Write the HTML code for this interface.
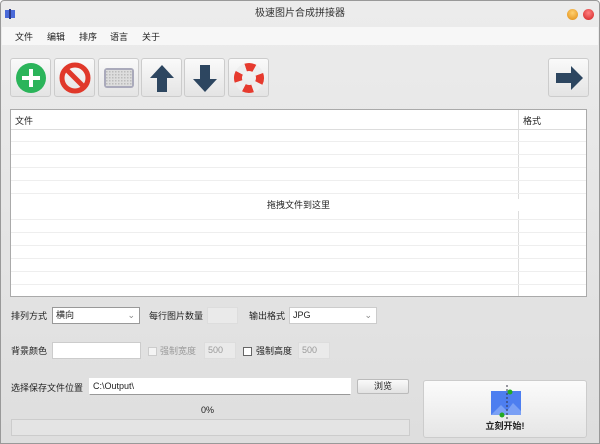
<!DOCTYPE html>
<html><head><meta charset="utf-8"><style>
*{box-sizing:border-box;margin:0;padding:0}
body{width:600px;height:444px;overflow:hidden;font-family:"Liberation Sans","Noto Sans CJK SC",sans-serif;font-size:9px;color:#222;background:#fff}
.win{position:absolute;left:0;top:0;width:600px;height:444px;background:linear-gradient(#ececec,#dedede);border:1px solid #999;border-radius:4px 4px 0 0}
.title{position:absolute;left:0;top:0;width:598px;height:26px;text-align:center;line-height:26px;font-size:10px;color:#333}
.menu{position:absolute;left:1px;top:26px;width:596px;height:18px;background:#f7f7f7}
.menu span{position:absolute;top:3px;font-size:9px}
.tb{position:absolute;top:57px;width:41px;height:39px;border:1px solid #ccc;border-radius:3px;background:linear-gradient(#fafafa,#e4e4e4)}
.tb svg{position:absolute;left:4px;top:3px}
.table{position:absolute;left:9px;top:108px;width:577px;height:188px;background:#fff;border:1px solid #aaa}
.row{position:absolute;left:0;width:575px;height:1px;background:#eee}
.abs{position:absolute}
.inp{position:absolute;background:#fff;border:1px solid #ccc;height:17px;font-size:9px;line-height:15px;padding-left:3px}
.dis{background:#eaeaea;color:#999;border-color:#ddd}
</style></head><body><div class="win">
<div class="title">极速图片合成拼接器</div>
<svg class="abs" style="left:4px;top:8px" width="10" height="10"><rect x="0" y="1" width="10" height="8" fill="#4a6ad8"/><rect x="4" y="0" width="2" height="10" fill="#2a3a88"/></svg>
<div class="abs" style="left:566px;top:8px;width:11px;height:11px;border-radius:50%;background:radial-gradient(circle at 50% 35%,#ffd070,#e08a10)"></div>
<div class="abs" style="left:582px;top:8px;width:11px;height:11px;border-radius:50%;background:radial-gradient(circle at 50% 35%,#ff8080,#d02020)"></div>
<div class="menu"><span style="left:13px">文件</span><span style="left:45px">编辑</span><span style="left:77px">排序</span><span style="left:108px">语言</span><span style="left:140px">关于</span></div>

<div class="tb" style="left:9px"><svg width="32" height="32"><circle cx="16" cy="16" r="15" fill="#2bb45a"/><rect x="14" y="7" width="4" height="18" fill="#fff"/><rect x="7" y="14" width="18" height="4" fill="#fff"/></svg></div>
<div class="tb" style="left:53px"><svg width="32" height="32"><circle cx="16" cy="16" r="13" fill="none" stroke="#e0382a" stroke-width="5"/><line x1="7" y1="7" x2="25" y2="25" stroke="#e0382a" stroke-width="5"/></svg></div>
<div class="tb" style="left:97px"><svg width="32" height="32"><defs><pattern id="p" width="3" height="3" patternUnits="userSpaceOnUse"><rect width="3" height="3" fill="#ddd"/><rect width="1.5" height="1.5" fill="#bbb"/></pattern></defs><rect x="1" y="6" width="30" height="20" rx="3" fill="#aab" /><rect x="3" y="8" width="26" height="16" fill="url(#p)"/></svg></div>
<div class="tb" style="left:140px"><svg width="32" height="32"><path d="M16 3 L28 16 L21 16 L21 30 L11 30 L11 16 L4 16Z" fill="#2d4660"/></svg></div>
<div class="tb" style="left:183px"><svg width="32" height="32"><path d="M16 30 L28 17 L21 17 L21 3 L11 3 L11 17 L4 17Z" fill="#2d4660"/></svg></div>
<div class="tb" style="left:227px"><svg width="32" height="32"><circle cx="16" cy="16" r="11" fill="none" stroke="#e63a2e" stroke-width="8" stroke-dasharray="9 8.3" transform="rotate(-20 16 16)"/><circle cx="16" cy="16" r="11" fill="none" stroke="#eee" stroke-width="8" stroke-dasharray="0 9 8.3 0" transform="rotate(-20 16 16)"/></svg></div>
<div class="tb" style="left:547px"><svg width="32" height="32"><path d="M30 16 L18 4 L18 11 L3 11 L3 21 L18 21 L18 28Z" fill="#2d4660"/></svg></div>

<div class="table">
<div class="abs" style="left:4px;top:4px">文件</div>
<div class="abs" style="left:512px;top:4px">格式</div>
<div class="abs" style="left:507px;top:0;width:1px;height:186px;background:#ddd"></div>
<div class="row" style="top:19px;background:#ddd"></div>
<div class="row" style="top:31px"></div><div class="row" style="top:44px"></div><div class="row" style="top:57px"></div><div class="row" style="top:70px"></div><div class="row" style="top:83px"></div><div class="row" style="top:96px"></div><div class="row" style="top:109px"></div><div class="row" style="top:122px"></div><div class="row" style="top:135px"></div><div class="row" style="top:148px"></div><div class="row" style="top:161px"></div><div class="row" style="top:174px"></div>
<div class="abs" style="left:0;top:89px;width:575px;text-align:center;background:#fff;line-height:12px">拖拽文件到这里</div>
</div>

<div class="abs" style="left:10px;top:308px">排列方式</div>
<div class="inp" style="left:51px;top:306px;width:88px;border-color:#999">横向<span class="abs" style="right:4px;top:0;color:#888">⌄</span></div>
<div class="abs" style="left:148px;top:308px">每行图片数量</div>
<div class="inp dis" style="left:206px;top:306px;width:31px"></div>
<div class="abs" style="left:248px;top:308px">输出格式</div>
<div class="inp" style="left:288px;top:306px;width:88px">JPG<span class="abs" style="right:4px;top:0;color:#888">⌄</span></div>

<div class="abs" style="left:10px;top:343px">背景颜色</div>
<div class="inp" style="left:51px;top:341px;width:89px"></div>
<div class="abs" style="left:147px;top:346px;width:9px;height:9px;border:1px solid #ccc;background:#f4f4f4"></div>
<div class="abs" style="left:159px;top:343px;color:#999">强制宽度</div>
<div class="inp dis" style="left:203px;top:341px;width:32px">500</div>
<div class="abs" style="left:242px;top:346px;width:9px;height:9px;border:1px solid #666;background:#fff"></div>
<div class="abs" style="left:255px;top:343px">强制高度</div>
<div class="inp dis" style="left:297px;top:341px;width:32px">500</div>

<div class="abs" style="left:10px;top:380px">选择保存文件位置</div>
<div class="inp" style="left:88px;top:377px;width:262px;border-color:#fff #fff #999 #fff">C:\Output\</div>
<div class="abs" style="left:356px;top:378px;width:52px;height:15px;border:1px solid #bbb;border-radius:2px;background:linear-gradient(#fafafa,#e2e2e2);text-align:center;line-height:13px">浏览</div>
<div class="abs" style="left:200px;top:404px">0%</div>
<div class="abs" style="left:10px;top:418px;width:399px;height:17px;border:1px solid #ccc;background:#e4e4e4"></div>

<div class="abs" style="left:422px;top:379px;width:164px;height:58px;border:1px solid #ccc;border-radius:3px;background:linear-gradient(#fbfbfb,#e6e6e6)">
<svg class="abs" style="left:65px;top:4px" width="34" height="34"><rect x="2" y="6" width="30" height="24" fill="#4d7ef0"/><path d="M2 30 L12 20 L18 26 L24 18 L32 26 L32 30Z" fill="#7aa0f5"/><line x1="18" y1="0" x2="18" y2="34" stroke="#334" stroke-dasharray="2 2"/><circle cx="21" cy="7" r="2.5" fill="#2a2"/><circle cx="13" cy="30" r="2.5" fill="#2a2"/></svg>
<div class="abs" style="left:0;top:38px;width:162px;text-align:center;font-weight:bold;font-size:9px">立刻开始!</div>
</div>
</div></body></html>
